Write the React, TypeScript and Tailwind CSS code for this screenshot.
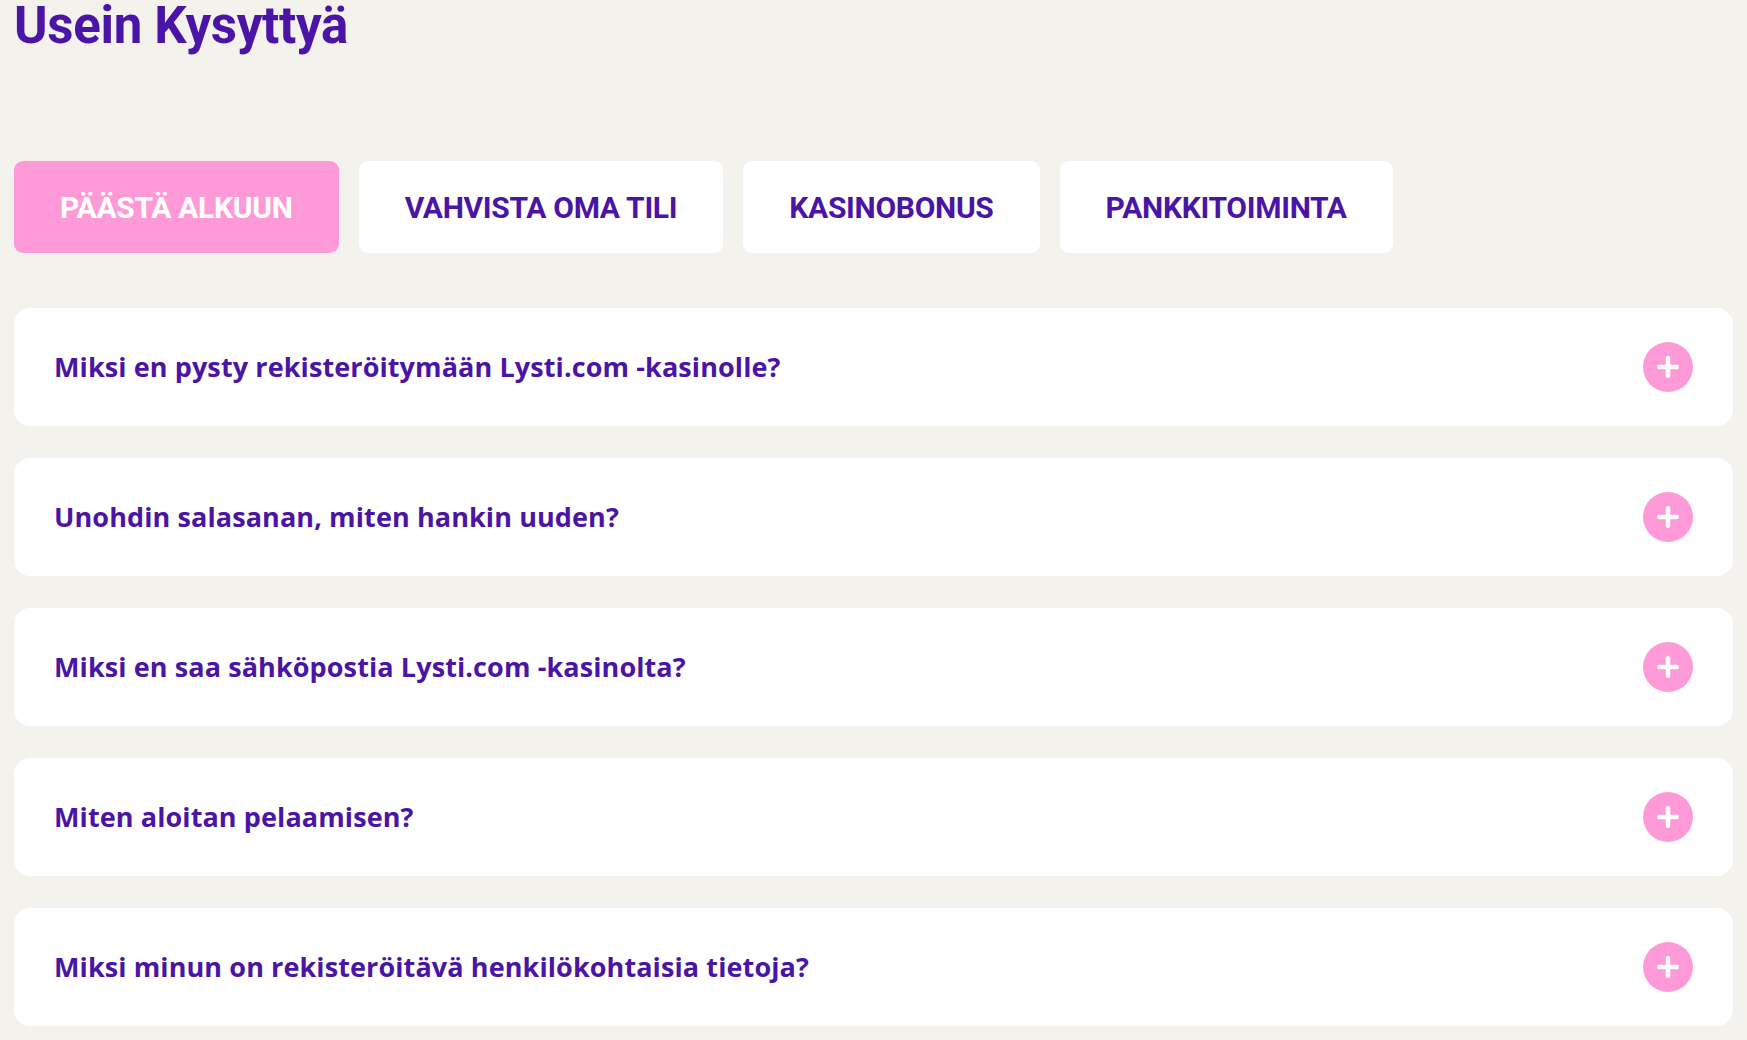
import { Plus } from 'lucide-react'

const tabs = ['PÄÄSTÄ ALKUUN', 'VAHVISTA OMA TILI', 'KASINOBONUS', 'PANKKITOIMINTA']

const questions = [
  'Miksi en pysty rekisteröitymään Lysti.com -kasinolle?',
  'Unohdin salasanan, miten hankin uuden?',
  'Miksi en saa sähköpostia Lysti.com -kasinolta?',
  'Miten aloitan pelaamisen?',
  'Miksi minun on rekisteröitävä henkilökohtaisia tietoja?',
]

export default function App() {
  const active = 0

  return (
    <div className="min-h-screen bg-[#f3f2ec] px-[14px] font-['Roboto',sans-serif] text-[#4a14a6] overflow-hidden">
      <h1 className="mt-[1px] text-[51px] leading-[50px] font-bold tracking-[-0.3px]">Usein Kysyttyä</h1>

      {/* category tabs */}
      <div className="mt-[110px] flex gap-[20px]">
        {tabs.map((tab, i) => (
          <button
            key={tab}
            className={`h-[92px] rounded-[9px] px-[46px] text-[30px] font-bold tracking-[-0.3px] ${
              i === active ? 'bg-[#ff9ad9] text-white' : 'bg-white text-[#4a14a6]'
            }`}
          >
            {tab}
          </button>
        ))}
      </div>

      {/* questions */}
      <div className="mt-[55px] flex flex-col gap-[32px]">
        {questions.map((q) => (
          <div
            key={q}
            className="flex h-[118px] items-center justify-between rounded-[16px] bg-white pl-[40px] pr-[40px]"
          >
            <span className="font-['Open_Sans',sans-serif] text-[27px] font-bold tracking-[0.1px]">{q}</span>
            <span className="flex h-[50px] w-[50px] items-center justify-center rounded-full bg-[#ff9ad9]">
              <Plus className="h-[30px] w-[30px] text-white" strokeWidth={3.6} />
            </span>
          </div>
        ))}
      </div>
    </div>
  )
}
